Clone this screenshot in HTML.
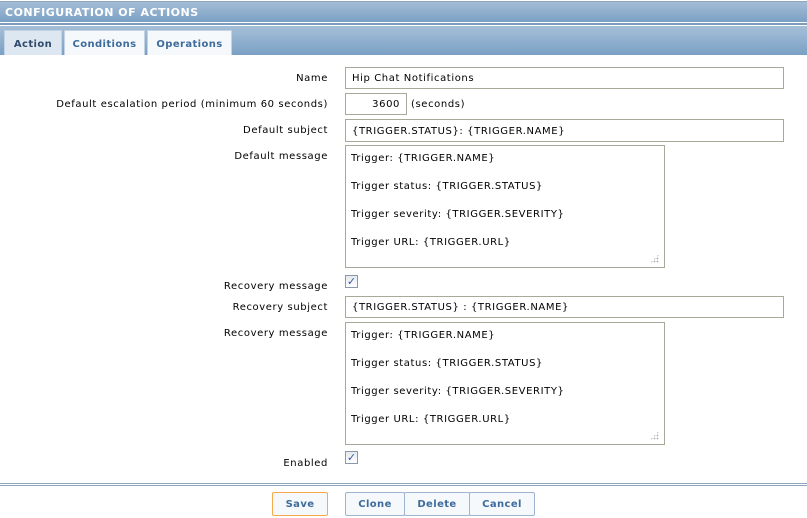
<!DOCTYPE html>
<html><head><meta charset="utf-8"><style>
*{box-sizing:border-box;margin:0;padding:0}
body{width:807px;height:518px;background:#fff;font-family:"DejaVu Sans",Verdana,sans-serif;font-size:10px;letter-spacing:.6px;color:#000;position:relative;overflow:hidden}
.hdr{position:absolute;left:0;top:1px;width:807px;height:21px;background:linear-gradient(#a4bdd6,#7aa0c4);border-top:1px solid #8da7c0;color:#fff;font-weight:bold;font-size:11px;padding:4px 0 0 5px;letter-spacing:.5px}
.l1{position:absolute;left:0;top:23px;width:807px;height:2px;background:#7d9bbb}
.tb{position:absolute;left:0;top:26px;width:807px;height:29px;background:linear-gradient(#a6bfd8,#7aa0c4)}
.tab{position:absolute;top:30px;height:25px;background:#f6f9fc;border:1px solid #c3d3e3;border-bottom:none;color:#3e6b9b;font-weight:bold;font-size:10px;letter-spacing:.4px;text-align:center;line-height:27px}
.lab{position:absolute;right:479px;text-align:right;white-space:nowrap}
.in{position:absolute;left:345px;border:1px solid #a9a99a;background:#fff;padding:0 6px;white-space:nowrap}
.ta{position:absolute;left:345px;width:320px;height:123px;border:1px solid #a9a99a;padding:6px 5px;line-height:28px}
.ta i{position:absolute;right:5px;bottom:4px;width:9px;height:9px;background:radial-gradient(circle,#aaa 0.7px,transparent 1px) 0 0/3px 3px;clip-path:polygon(100% 0,100% 100%,0 100%)}
.cb{position:absolute;left:345px;width:13px;height:13px;border:1px solid #8b98a8;background:linear-gradient(#e4e9ef,#fff);color:#3a5a9a;font-size:11px;line-height:11px;text-align:center;font-weight:bold;letter-spacing:0}
.bl{position:absolute;left:0;width:807px;height:2px;background:#8da5be}
.btn{position:absolute;top:492px;height:24px;border:1px solid #9fb5cf;background:#f6f9fc;color:#3e6b9b;font-weight:bold;text-align:center;line-height:24px;border-radius:2px;letter-spacing:.4px}
</style></head><body>
<div class="hdr">CONFIGURATION OF ACTIONS</div>
<div class="l1"></div>
<div class="tb"></div>
<div class="tab" style="left:4px;width:58px;background:#dde7f1;color:#2f4a6b">Action</div>
<div class="tab" style="left:64px;width:81px">Conditions</div>
<div class="tab" style="left:147px;width:85px">Operations</div>

<div class="lab" style="top:73px">Name</div>
<div class="in" style="top:67px;width:439px;height:22px;line-height:22px">Hip Chat Notifications</div>
<div class="lab" style="top:99px">Default escalation period (minimum 60 seconds)</div>
<div class="in" style="top:93px;width:62px;height:22px;line-height:22px;text-align:right">3600</div>
<div style="position:absolute;left:411px;top:99px">(seconds)</div>
<div class="lab" style="top:125px">Default subject</div>
<div class="in" style="top:119px;width:439px;height:23px;line-height:23px">{TRIGGER.STATUS}: {TRIGGER.NAME}</div>
<div class="lab" style="top:151px">Default message</div>
<div class="ta" style="top:145px"><div style="margin-top:-7px">Trigger: {TRIGGER.NAME}<br>Trigger status: {TRIGGER.STATUS}<br>Trigger severity: {TRIGGER.SEVERITY}<br>Trigger URL: {TRIGGER.URL}</div><i></i></div>
<div class="lab" style="top:281px">Recovery message</div>
<div class="cb" style="top:275px">✓</div>
<div class="lab" style="top:302px">Recovery subject</div>
<div class="in" style="top:296px;width:439px;height:22px;line-height:22px">{TRIGGER.STATUS} : {TRIGGER.NAME}</div>
<div class="lab" style="top:328px">Recovery message</div>
<div class="ta" style="top:322px"><div style="margin-top:-7px">Trigger: {TRIGGER.NAME}<br>Trigger status: {TRIGGER.STATUS}<br>Trigger severity: {TRIGGER.SEVERITY}<br>Trigger URL: {TRIGGER.URL}</div><i></i></div>
<div class="lab" style="top:458px">Enabled</div>
<div class="cb" style="top:451px">✓</div>

<div class="bl" style="top:483px;height:1px"></div>
<div class="bl" style="top:485px;height:1px"></div>
<div class="btn" style="left:272px;width:56px;border-color:#f5a94a">Save</div>
<div class="btn" style="left:345px;width:60px">Clone</div>
<div class="btn" style="left:404px;width:66px">Delete</div>
<div class="btn" style="left:469px;width:66px">Cancel</div>
</body></html>
